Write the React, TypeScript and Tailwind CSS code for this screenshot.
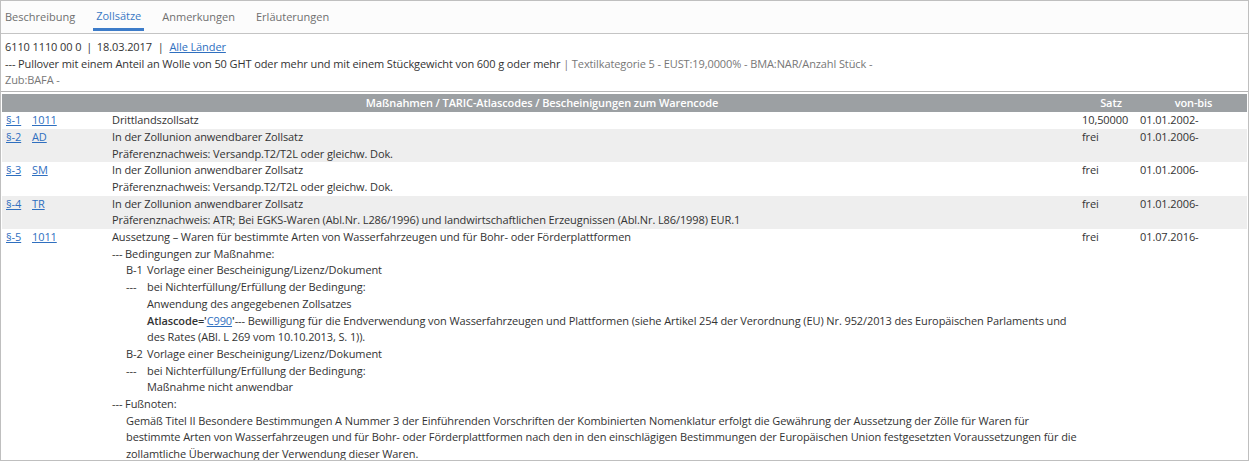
import React from 'react';

const tabs = ['Beschreibung', 'Zollsätze', 'Anmerkungen', 'Erläuterungen'];

const rows = [
  { p: '§-1', code: '1011', lines: ['Drittlandszollsatz'], satz: '10,50000', date: '01.01.2002-' },
  {
    p: '§-2',
    code: 'AD',
    lines: ['In der Zollunion anwendbarer Zollsatz', 'Präferenznachweis: Versandp.T2/T2L oder gleichw. Dok.'],
    satz: 'frei',
    date: '01.01.2006-',
  },
  {
    p: '§-3',
    code: 'SM',
    lines: ['In der Zollunion anwendbarer Zollsatz', 'Präferenznachweis: Versandp.T2/T2L oder gleichw. Dok.'],
    satz: 'frei',
    date: '01.01.2006-',
  },
  {
    p: '§-4',
    code: 'TR',
    lines: [
      'In der Zollunion anwendbarer Zollsatz',
      'Präferenznachweis: ATR; Bei EGKS-Waren (Abl.Nr. L286/1996) und landwirtschaftlichen Erzeugnissen (Abl.Nr. L86/1998) EUR.1',
    ],
    satz: 'frei',
    date: '01.01.2006-',
  },
];

function Link({ children }: { children: React.ReactNode }) {
  return <a href="#" className="text-[#2f6fbf] underline">{children}</a>;
}

function Cond({ label, children }: { label: string; children: React.ReactNode }) {
  return (
    <div className="flex">
      <span className="w-[21px] shrink-0">{label}</span>
      <div className="flex-1">{children}</div>
    </div>
  );
}

export default function App() {
  return (
    <div
      className="h-[461px] w-[1249px] overflow-hidden border border-[#bfbfbf] bg-white text-[11px] leading-[16.7px] tracking-[-0.1px] text-[#333]"
      style={{ fontFamily: '"Open Sans", "Liberation Sans", sans-serif' }}
    >
      <div className="flex h-[33px] gap-[15px] border-b border-[#c4c4c4] bg-[#fcfcfc] px-[1px] tracking-normal">
        {tabs.map((t, i) => (
          <div
            key={t}
            className={
              i === 1
                ? 'flex h-[30px] items-center border-b-[3px] border-[#3d7cc9] px-[3px] pt-[3px] text-[#3a78c4]'
                : 'flex h-[30px] items-center px-[3px] pt-[3px] text-[#6f6f6f]'
            }
          >
            {t}
          </div>
        ))}
      </div>

      <div className="border-b border-[#b5b5b5] px-[4px] pt-[5px] pb-[2px]">
        <div>
          6110 1110 00 0 <span className="mx-[2px]">|</span> 18.03.2017 <span className="mx-[3px]">|</span>{' '}
          <Link>Alle Länder</Link>
        </div>
        <div>
          --- Pullover mit einem Anteil an Wolle von 50 GHT oder mehr und mit einem Stückgewicht von 600 g oder mehr{' '}
          <span className="text-[#777]">| Textilkategorie 5 - EUST:19,0000% - BMA:NAR/Anzahl Stück -</span>
        </div>
        <div className="text-[#777]">Zub:BAFA -</div>
      </div>

      <div className="mt-[2px] px-[1px]">
        <div className="grid h-[18px] grid-cols-[1fr_58px_107px] items-center bg-[#9ca0a3] font-semibold text-white">
          <div className="text-center">Maßnahmen / TARIC-Atlascodes / Bescheinigungen zum Warencode</div>
          <div className="text-center">Satz</div>
          <div className="text-center">von-bis</div>
        </div>

        {rows.map((r, i) => (
          <div
            key={r.p}
            className={`grid grid-cols-[26px_80px_1fr_58px_107px] pl-[4px] ${i % 2 === 1 ? 'bg-[#eeeeee]' : 'bg-white'}`}
          >
            <div><Link>{r.p}</Link></div>
            <div><Link>{r.code}</Link></div>
            <div>
              {r.lines.map(l => (
                <div key={l}>{l}</div>
              ))}
            </div>
            <div>{r.satz}</div>
            <div>{r.date}</div>
          </div>
        ))}

        <div className="grid grid-cols-[26px_80px_1fr_58px_107px] bg-white pl-[4px]">
          <div><Link>§-5</Link></div>
          <div><Link>1011</Link></div>
          <div>
            <div>Aussetzung – Waren für bestimmte Arten von Wasserfahrzeugen und für Bohr- oder Förderplattformen</div>
            <div>--- Bedingungen zur Maßnahme:</div>
            <div className="pl-[14px]">
              <Cond label="B-1">Vorlage einer Bescheinigung/Lizenz/Dokument</Cond>
              <Cond label="---">
                <div>bei Nichterfüllung/Erfüllung der Bedingung:</div>
                <div>Anwendung des angegebenen Zollsatzes</div>
                <div>
                  <b className="font-semibold">Atlascode='</b>
                  <Link>C990</Link>
                  <b className="font-semibold">'</b>--- Bewilligung für die Endverwendung von Wasserfahrzeugen und
                  Plattformen (siehe Artikel 254 der Verordnung (EU) Nr. 952/2013 des Europäischen Parlaments und des
                  Rates (ABl. L 269 vom 10.10.2013, S. 1)).
                </div>
              </Cond>
              <Cond label="B-2">Vorlage einer Bescheinigung/Lizenz/Dokument</Cond>
              <Cond label="---">
                <div>bei Nichterfüllung/Erfüllung der Bedingung:</div>
                <div>Maßnahme nicht anwendbar</div>
              </Cond>
            </div>
            <div>--- Fußnoten:</div>
            <div className="pl-[14px]">
              Gemäß Titel II Besondere Bestimmungen A Nummer 3 der Einführenden Vorschriften der Kombinierten
              Nomenklatur erfolgt die Gewährung der Aussetzung der Zölle für Waren für bestimmte Arten von
              Wasserfahrzeugen und für Bohr- oder Förderplattformen nach den in den einschlägigen Bestimmungen der
              Europäischen Union festgesetzten Voraussetzungen für die zollamtliche Überwachung der Verwendung dieser
              Waren.
            </div>
          </div>
          <div>frei</div>
          <div>01.07.2016-</div>
        </div>
      </div>
    </div>
  );
}
